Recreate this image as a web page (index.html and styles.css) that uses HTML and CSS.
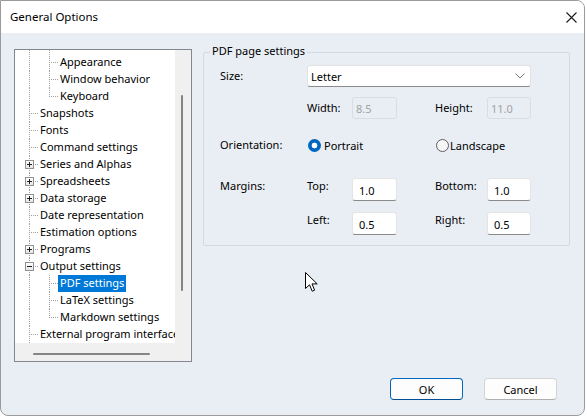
FILE: index.html
```html
<!DOCTYPE html>
<html>
<head>
<meta charset="utf-8">
<link rel="stylesheet" href="styles.css">
</head>
<body>
<div class="window">
  <div class="titlebar">
    <span class="title">General Options</span>
    <svg class="close" width="11" height="11" viewBox="0 0 11 11"><path d="M0.5 0.5L10.5 10.5M10.5 0.5L0.5 10.5" stroke="#1a1a1a" stroke-width="1.1" fill="none"/></svg>
  </div>
  <div class="content">
    <div class="main">
      <div class="treebox">
        <div class="viewport">
          <div class="row spacer"><span class="c v"></span><span class="c v"></span></div>
          <div class="row"><span class="c v"></span><span class="c b"></span><span class="t">Appearance</span></div>
          <div class="row"><span class="c v"></span><span class="c b"></span><span class="t">Window behavior</span></div>
          <div class="row"><span class="c v"></span><span class="c l"></span><span class="t">Keyboard</span></div>
          <div class="row"><span class="c b"></span><span class="t">Snapshots</span></div>
          <div class="row"><span class="c b"></span><span class="t">Fonts</span></div>
          <div class="row"><span class="c b"></span><span class="t">Command settings</span></div>
          <div class="row"><span class="c b"><i class="box plus"></i></span><span class="t">Series and Alphas</span></div>
          <div class="row"><span class="c b"><i class="box plus"></i></span><span class="t">Spreadsheets</span></div>
          <div class="row"><span class="c b"><i class="box plus"></i></span><span class="t">Data storage</span></div>
          <div class="row"><span class="c b"></span><span class="t">Date representation</span></div>
          <div class="row"><span class="c b"></span><span class="t">Estimation options</span></div>
          <div class="row"><span class="c b"><i class="box plus"></i></span><span class="t">Programs</span></div>
          <div class="row"><span class="c b"><i class="box minus"></i></span><span class="t">Output settings</span></div>
          <div class="row"><span class="c v"></span><span class="c b"></span><span class="t sel">PDF settings</span></div>
          <div class="row"><span class="c v"></span><span class="c b"></span><span class="t">LaTeX settings</span></div>
          <div class="row"><span class="c v"></span><span class="c l"></span><span class="t">Markdown settings</span></div>
          <div class="row"><span class="c b"></span><span class="t">External program interface</span></div>
        </div>
        <div class="vscroll"><div class="vthumb"></div></div>
        <div class="hscroll"><div class="hthumb"></div></div>
        <div class="corner"></div>
      </div>
      <div class="group">
        <div class="group-title">PDF page settings</div>
        <div class="grow r1">
          <span class="lbl">Size:</span>
          <div class="combo"><span>Letter</span>
            <svg width="10" height="6" viewBox="0 0 10 6"><path d="M0.5 0.5L5 5L9.5 0.5" stroke="#7a7a7a" fill="none" stroke-width="1"/></svg>
          </div>
        </div>
        <div class="grow r2">
          <span></span>
          <span class="lbl">Width:</span>
          <div class="inp dis">8.5</div>
          <span></span>
          <span class="lbl">Height:</span>
          <div class="inp dis">11.0</div>
        </div>
        <div class="grow r3">
          <span class="lbl">Orientation:</span>
          <div class="radio on span3"><i class="dot"></i>Portrait</div>
          <div class="radio span2"><i class="dot"></i>Landscape</div>
        </div>
        <div class="grow r4 top">
          <span class="lbl">Margins:</span>
          <span class="lbl">Top:</span>
          <div class="inp">1.0</div>
          <span></span>
          <span class="lbl">Bottom:</span>
          <div class="inp">1.0</div>
        </div>
        <div class="grow r5 top">
          <span></span>
          <span class="lbl">Left:</span>
          <div class="inp">0.5</div>
          <span></span>
          <span class="lbl">Right:</span>
          <div class="inp">0.5</div>
        </div>
      </div>
    </div>
    <div class="footer">
      <button class="btn default">OK</button>
      <button class="btn">Cancel</button>
    </div>
  </div>
  <svg class="cursor" width="13" height="21" viewBox="0 0 13 21"><path d="M0.5 0.5V16.5L4.5 12.8L7.2 19.2L9.6 18.2L7 11.9H12.2Z" fill="#fff" stroke="#000" stroke-width="1" stroke-linejoin="round"/></svg>
</div>
</body>
</html>
```

FILE: styles.css
```css
html, body { margin: 0; padding: 0; background: #ffffff; }
body {
  font-family: "Noto Sans", "Open Sans", sans-serif;
  font-size: 11px;
  color: #000;
  width: 587px;
  height: 417px;
  overflow: hidden;
}
.window {
  position: relative;
  box-sizing: border-box;
  width: 585px;
  height: 416px;
  border: 1px solid #9a9a9a;
  border-radius: 0 8px 8px 8px;
  background: #e9eef4;
  display: flex;
  flex-direction: column;
  overflow: hidden;
}
.titlebar {
  height: 32px;
  flex: none;
  background: #ffffff;
  display: flex;
  align-items: center;
  justify-content: space-between;
  padding: 0 7px 0 9px;
}
.title { font-size: 11.5px; line-height: 16px; }
.close { display: block; }
.content {
  flex: 1;
  display: flex;
  flex-direction: column;
  padding: 16px 0 0 13px;
}
.main { display: flex; align-items: flex-start; }

/* tree */
.treebox {
  flex: none;
  width: 178px;
  height: 313px;
  box-sizing: border-box;
  border: 1px solid #828790;
  background: #fff;
  display: grid;
  grid-template-columns: 160px 16px;
  grid-template-rows: 293px 18px;
}
.viewport {
  overflow: hidden;
  padding-left: 3px;
  white-space: nowrap;
}
.row { display: flex; height: 17px; }
.row.spacer { height: 4px; }
.c { position: relative; width: 20px; flex: none; }
.v::before, .b::before, .l::before {
  content: "";
  position: absolute;
  left: 11px;
  top: 0;
  bottom: 0;
  width: 1px;
  background: repeating-linear-gradient(to bottom, #a0a0a0 0 1px, transparent 1px 2px);
}
.l::before { bottom: auto; height: 9px; }
.b::after, .l::after {
  content: "";
  position: absolute;
  left: 12px;
  top: 8px;
  width: 8px;
  height: 1px;
  background: repeating-linear-gradient(to right, transparent 0 1px, #a0a0a0 1px 2px);
}
.box {
  position: absolute;
  left: 7px;
  top: 4px;
  width: 9px;
  height: 9px;
  box-sizing: border-box;
  border: 1px solid #919191;
  background: linear-gradient(#ffffff, #e6e6e6);
  z-index: 1;
}
.box::before {
  content: "";
  position: absolute;
  left: 1px; top: 3px; width: 5px; height: 1px;
  background: #1e1e1e;
}
.plus::after {
  content: "";
  position: absolute;
  left: 3px; top: 1px; width: 1px; height: 5px;
  background: #1e1e1e;
}
.t {
  display: block;
  line-height: 16px;
  height: 17px;
  padding: 0 2px;
}
.t.sel { background: #0078d7; color: #fff; }
.vscroll {
  background: #f0f0f0;
  padding: 45px 0 0 6px;
}
.vthumb { width: 2px; height: 196px; background: #858585; border-radius: 1px; }
.hscroll {
  background: #f0f0f0;
  padding: 10px 0 0 18px;
}
.hthumb { width: 117px; height: 2px; background: #858585; border-radius: 1px; }
.corner { background: #f0f0f0; }

/* group */
.group {
  margin: 3px 0 0 11px;
  width: 367px;
  box-sizing: border-box;
  border: 1px solid #d3d9e0;
  border-radius: 2px;
  padding: 0 0 10px 16px;
}
.group-title {
  width: fit-content;
  line-height: 15px;
  margin: -10px 0 7px -10px;
  padding: 0 2px;
  background: #e9eef4;
}
.grow {
  display: grid;
  grid-template-columns: 87px 45px 45px 38px 52px 44px;
  align-items: center;
  height: 22px;
}
.r2 { margin-top: 10px; }
.r3 { margin-top: 15px; }
.r4 { margin-top: 22px; height: 23px; }
.r5 { margin-top: 11px; height: 23px; }
.grow.top .lbl { align-self: start; line-height: 15px; }
.lbl { line-height: 16px; white-space: nowrap; }
.combo {
  grid-column: 2 / 7;
  height: 22px;
  box-sizing: border-box;
  background: #fff;
  border: 1px solid #e2e2e2;
  border-bottom-color: #8a8a8a;
  border-radius: 3px;
  display: flex;
  align-items: center;
  justify-content: space-between;
  padding: 0 5px 0 3px;
}
.combo svg { display: block; }
.inp {
  height: 100%;
  box-sizing: border-box;
  background: #fff;
  border: 1px solid #e4e4e4;
  border-bottom-color: #8a8a8a;
  border-radius: 3px;
  display: flex;
  align-items: center;
  padding: 1px 0 0 6px;
}
.inp.dis {
  background: transparent;
  border: 1px solid #d8dde3;
  color: #a3a3a3;
  padding: 0 0 0 3px;
}
.radio {
  display: flex;
  align-items: center;
  gap: 3px;
  padding-left: 1px;
  white-space: nowrap;
}
.span3 { grid-column: 2 / 5; }
.span2 { grid-column: 5 / 7; gap: 1px; }
.dot {
  width: 13px;
  height: 13px;
  box-sizing: border-box;
  border-radius: 50%;
  border: 1px solid #5f5f5f;
  background: #f6f6f6;
}
.on .dot {
  border: none;
  background: radial-gradient(circle, #ffffff 0 2.6px, #0067c0 3.2px);
}

/* footer */
.footer {
  margin-top: 16px;
  display: flex;
  justify-content: flex-end;
  gap: 21px;
  padding-right: 27px;
}
.btn {
  width: 73px;
  height: 22px;
  box-sizing: border-box;
  font-family: inherit;
  font-size: 11px;
  color: #000;
  background: #fdfdfd;
  border: 1px solid #d5d5d5;
  border-bottom-color: #b0b0b0;
  border-radius: 4px;
  padding: 0;
}
.btn.default { border-color: #0067c0; border-bottom-color: #004f95; }
.cursor { position: absolute; left: 304px; top: 271px; }
```
